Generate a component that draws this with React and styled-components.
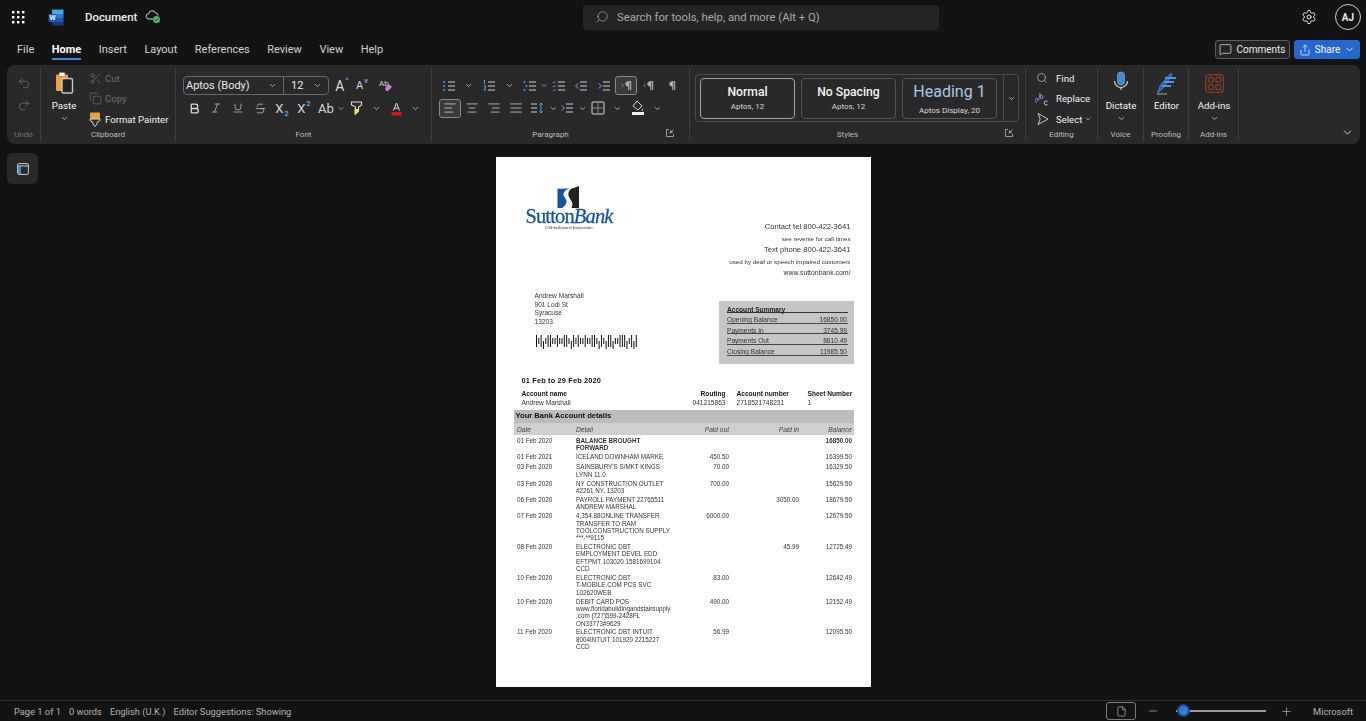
import React from 'react';
import styled, { createGlobalStyle } from 'styled-components';
import {
  Undo2, Redo2, Scissors, Copy, Bold, Italic, Underline, Strikethrough, ChevronDown, Search, Settings,
  MessageSquare, Share, File, Minus, Plus, AlignLeft, AlignCenter, AlignRight, AlignJustify,
} from 'lucide-react';

const GlobalStyle = createGlobalStyle`
  html, body { margin: 0; height: 100%; overflow: hidden; background: #131313; }
  * { box-sizing: border-box; }
  #root { height: 100%; }
`;

const Shell = styled.div`
  height: 100vh;
  display: flex;
  flex-direction: column;
  background: #131313;
  color: #e8e8e8;
  font-family: Roboto, "Noto Sans", sans-serif;
`;

const TitleBar = styled.header`
  height: 34px;
  display: grid;
  grid-template-columns: 583px 356px 1fr;
  align-items: center;
`;
const TitleLeft = styled.div`
  display: flex;
  align-items: center;
  padding-left: 11px;
`;
const DocName = styled.span`
  font-size: 11.4px;
  font-weight: 500;
  margin: 0 8px 0 21px;
  color: #f0f0f0;
`;
const SearchBox = styled.div`
  height: 25px;
  background: #242424;
  border-radius: 4px;
  display: flex;
  align-items: center;
  gap: 8px;
  padding-left: 12px;
  font-size: 11.3px;
  color: #ababab;
`;
const TitleRight = styled.div`
  display: flex;
  justify-content: flex-end;
  align-items: center;
  gap: 18px;
  padding-right: 5px;
`;
const Avatar = styled.div`
  width: 26px;
  height: 26px;
  border: 1px solid #cfcfcf;
  border-radius: 50%;
  display: flex;
  align-items: center;
  justify-content: center;
  font-size: 10px;
  font-weight: 700;
`;

const TabBar = styled.nav`
  height: 31px;
  display: flex;
  align-items: flex-start;
  padding: 5px 6px 0 17px;
`;
const Tab = styled.div`
  height: 21px;
  margin-right: 17.5px;
  font-size: 11px;
  line-height: 21px;
  font-weight: ${(p) => (p.$active ? 700 : 400)};
  color: ${(p) => (p.$active ? '#ffffff' : '#d4d4d4')};
  border-bottom: ${(p) => (p.$active ? '2px solid #3f87e0' : 'none')};
`;
const TabActions = styled.div`
  margin-left: auto;
  margin-top: 1px;
  display: flex;
  gap: 4px;
`;
const CommentsButton = styled.div`
  width: 75px;
  height: 19px;
  background: #232323;
  border: 1px solid #5c5c5c;
  border-radius: 3px;
  display: flex;
  align-items: center;
  justify-content: center;
  gap: 4px;
  font-size: 10px;
  color: #ececec;
`;
const ShareButton = styled(CommentsButton)`
  width: 66px;
  background: #2468cf;
  border-color: #2468cf;
  color: #fff;
`;

const Ribbon = styled.section`
  height: 79px;
  margin: 0 6px 0 7px;
  padding: 3px 0;
  background: #292929;
  border-radius: 8px;
  display: flex;
  position: relative;
`;
const Group = styled.div`
  width: ${(p) => p.$w}px;
  flex: none;
  display: flex;
  flex-direction: column;
  border-right: 1px solid #3e3e3e;
  position: relative;
`;
const GroupBody = styled.div`
  height: 59px;
  padding-top: ${(p) => p.$top || 0}px;
  display: flex;
  flex-direction: ${(p) => (p.$row ? 'row' : 'column')};
  gap: ${(p) => p.$gap || 0}px;
  padding-left: ${(p) => p.$left || 0}px;
`;
const GroupLabel = styled.div`
  height: 14px;
  font-size: 8px;
  line-height: 15px;
  text-align: center;
  padding-right: ${(p) => p.$shift || 0}px;
  color: ${(p) => (p.$dim ? '#767676' : '#bdbdbd')};
`;
const Launcher = styled.div`
  position: absolute;
  right: ${(p) => p.$right}px;
  bottom: 4px;
  color: #b5b5b5;
  display: flex;
`;
const ToolRow = styled.div`
  height: ${(p) => p.$h || 20}px;
  display: flex;
  align-items: center;
`;
const Tool = styled.div`
  width: ${(p) => p.$w || 22}px;
  height: ${(p) => p.$h || 19}px;
  flex: none;
  display: flex;
  align-items: center;
  justify-content: center;
  color: ${(p) => (p.$dim ? '#767676' : '#d8d8d8')};
  font-size: ${(p) => p.$fs || 12}px;
  border-radius: 3px;
  border: ${(p) => (p.$on ? '1px solid #8a8a8a' : 'none')};
  background: ${(p) => (p.$on ? '#3a3a3a' : 'transparent')};
`;
const Spacer = styled.div`
  width: ${(p) => p.$w}px;
  flex: none;
`;
const Accent = styled.span`
  color: #5b9fe6;
  font-size: 8px;
  font-weight: 700;
  margin-left: 1px;
  align-self: ${(p) => (p.$up ? 'flex-start' : 'flex-end')};
`;
const BigColumn = styled.div`
  width: ${(p) => p.$w}px;
  display: flex;
  flex-direction: column;
  align-items: center;
  font-size: 9.7px;
  color: #f4f4f4;
`;
const BigIcon = styled.div`
  height: 30px;
  display: flex;
  align-items: center;
`;
const BigText = styled.div`
  line-height: 15px;
  margin-bottom: 1px;
`;
const SmallAction = styled.div`
  height: 20.5px;
  flex: none;
  display: flex;
  align-items: center;
  gap: ${(p) => p.$gap || 4}px;
  font-size: 9.6px;
  color: ${(p) => (p.$dim ? '#6f6f6f' : '#f2f2f2')};
`;
const ActionIcon = styled.div`
  width: 16px;
  display: flex;
  justify-content: center;
  color: ${(p) => (p.$dim ? '#767676' : '#cfcfcf')};
`;
const SelectChev = styled.span`
  display: flex;
  margin-left: -4px;
`;
const Combo = styled.div`
  width: 146px;
  height: 19px;
  flex: none;
  border: 1px solid #686868;
  border-radius: 4px;
  display: grid;
  grid-template-columns: 100px 1fr;
  font-size: 11px;
  color: #ececec;
`;
const ComboCell = styled.div`
  display: flex;
  align-items: center;
  justify-content: space-between;
  padding: 0 6px 0 ${(p) => p.$pad}px;
  border-right: ${(p) => (p.$split ? '1px solid #686868' : 'none')};
`;
const StylesBox = styled.div`
  width: 324px;
  height: 48px;
  margin: 6px 0 0 5px;
  border: 1px solid #4b4b4b;
  border-radius: 4px;
  display: flex;
  align-items: center;
  padding-left: 4px;
  gap: 6px;
`;
const StyleCard = styled.div`
  width: 95px;
  height: 41px;
  flex: none;
  border: 1px solid ${(p) => (p.$on ? '#a2a2a2' : '#555555')};
  border-radius: 4px;
  display: flex;
  flex-direction: column;
  align-items: center;
  justify-content: center;
`;
const StyleName = styled.div`
  font-size: 12.2px;
  line-height: 17px;
  font-weight: 500;
  color: #f4f4f4;
`;
const HeadingName = styled.div`
  font-size: 16px;
  line-height: 22px;
  margin-bottom: 2px;
  color: #a9c6e6;
`;
const StyleMeta = styled.div`
  font-size: 8px;
  line-height: 11px;
  color: #dadada;
`;
const MoreStyles = styled.div`
  width: 22px;
  height: 100%;
  margin-left: auto;
  border-left: 1px solid #4b4b4b;
  display: flex;
  align-items: center;
  justify-content: center;
`;
const RibbonCollapse = styled.div`
  position: absolute;
  right: 6px;
  bottom: 5px;
  color: #e4e4e4;
  display: flex;
`;

const Main = styled.main`
  flex: 1;
  min-height: 0;
  display: grid;
  grid-template-columns: 1fr 375px 1fr;
`;
const SidePanel = styled.div`
  padding: 9px 0 0 7px;
`;
const SideButton = styled.div`
  width: 31px;
  height: 31px;
  background: #292929;
  border-radius: 6px;
  display: flex;
  align-items: center;
  justify-content: center;
`;
const Page = styled.article`
  width: 375px;
  height: 530px;
  margin-top: 13px;
  background: #fff;
  color: #222;
  font-family: "Liberation Sans", Arial, sans-serif;
  font-size: 6.6px;
  filter: blur(0.3px);
`;
const PageHead = styled.div`
  height: 125px;
  display: flex;
  justify-content: space-between;
  padding: 29px 20px 0 29px;
`;
const LogoBlock = styled.div`
  width: 89px;
  display: flex;
  flex-direction: column;
  align-items: center;
  color: #15559b;
`;
const LogoMark = styled.div`
  display: flex;
  margin-right: 2px;
`;
const LogoWord = styled.div`
  font-family: "Liberation Serif", serif;
  font-size: 20.5px;
  line-height: 17px;
  letter-spacing: -0.85px;
  white-space: nowrap;
  -webkit-text-stroke: 0.3px #15559b;
  em { font-style: italic; }
`;
const LogoTag = styled.div`
  font-family: "Liberation Serif", serif;
  font-size: 4.6px;
  line-height: 5px;
  color: #333;
`;
const Contact = styled.div`
  margin-top: 35px;
  text-align: right;
`;
const ContactLine = styled.div`
  font-size: ${(p) => p.$size}px;
  line-height: ${(p) => (p.$tall ? 12 : 11)}px;
  color: #333;
`;
const AddressRow = styled.div`
  height: 84px;
  display: flex;
  justify-content: space-between;
  padding: 10px 17px 0 39px;
`;
const Address = styled.div`
  line-height: 8.6px;
  color: #333;
`;
const Barcode = styled.div`
  display: flex;
  margin: 9px 0 0 1px;
`;
const Summary = styled.div`
  width: 135px;
  height: 63px;
  margin-top: 9px;
  background: #c6c6c6;
  padding: 4px 5.5px 0 8.5px;
  color: #333;
`;
const SummaryTitle = styled.div`
  height: 8px;
  line-height: 9px;
  font-weight: 700;
  border-bottom: 0.6px solid #333;
  color: #222;
`;
const SummaryRow = styled.div`
  height: 10.7px;
  padding-top: 3px;
  display: flex;
  justify-content: space-between;
  border-bottom: 0.6px solid #444;
  line-height: 8px;
  span:last-child { padding-right: 1px; }
`;
const Period = styled.div`
  padding: 9.5px 0 0 26px;
  font-size: 7.4px;
  line-height: 9px;
  font-weight: 700;
  letter-spacing: 0.15px;
  color: #111;
`;
const AccountGrid = styled.div`
  margin-top: 5.5px;
  padding-left: 26px;
  display: grid;
  grid-template-columns: 120px 84px 11px 71px auto;
  line-height: 8.5px;
  color: #333;
`;
const AccountHead = styled.div`
  font-weight: 700;
  color: #111;
  text-align: ${(p) => (p.$right ? 'right' : 'left')};
`;
const AccountCell = styled.div`
  text-align: ${(p) => (p.$right ? 'right' : 'left')};
`;
const Gap = styled.div``;
const Statement = styled.div`
  margin: 3px 17px 0 18px;
`;
const StatementTitle = styled.div`
  height: 13px;
  background: #bcbcbc;
  font-size: 7.6px;
  font-weight: 700;
  line-height: 11px;
  padding-left: 2px;
  color: #111;
`;
const TxnGrid = styled.div`
  display: grid;
  grid-template-columns: 59px 100px 53px 70px 53px;
  padding: 0 1.5px 0 3.5px;
`;
const TxnHead = styled(TxnGrid)`
  height: 12px;
  background: #cfcfcf;
  font-style: italic;
  align-items: center;
  color: #444;
`;
const TxnRow = styled(TxnGrid)`
  font-size: 6.3px;
  line-height: 7.33px;
  min-height: 10.6px;
  padding-top: 1.6px;
  color: #333;
  font-weight: ${(p) => (p.$bold ? 700 : 400)};
`;
const TxnDate = styled.div`
  font-weight: 400;
`;
const Num = styled.div`
  text-align: right;
`;
const DetailText = styled.div`
  white-space: pre-line;
`;

const StatusBar = styled.footer`
  height: 21px;
  border-top: 1px solid #333;
  display: flex;
  align-items: center;
  padding: 0 13px 0 14px;
  font-size: 9.3px;
  color: #b4b4b4;
`;
const StatusItem = styled.span`
  margin-right: 8px;
`;
const StatusRight = styled.div`
  margin-left: auto;
  display: flex;
  align-items: center;
`;
const ViewButton = styled.div`
  width: 30px;
  height: 18px;
  border: 1px solid #7c7c7c;
  border-radius: 3px;
  display: flex;
  align-items: center;
  justify-content: center;
  margin-right: 11px;
`;
const ZoomTrack = styled.div`
  width: 90px;
  height: 2px;
  margin: 0 14px 0 17px;
  background: #9a9a9a;
  position: relative;
`;
const ZoomThumb = styled.div`
  position: absolute;
  left: 1px;
  top: -6px;
  width: 13px;
  height: 13px;
  border-radius: 50%;
  background: #2f7de0;
  border: 2px solid #1c4a86;
`;
const Company = styled.span`
  margin-left: 20px;
`;

const Chev = ({ size = 9, color = '#d0d0d0' }) => <ChevronDown size={size} color={color} strokeWidth={2} />;

const thin = { size: 14, strokeWidth: 1.3 };

const Waffle = () => (
  <svg width="14" height="14" viewBox="0 0 14 14" fill="#fff">
    {[1, 6, 11].flatMap((y) => [1, 6, 11].map((x) => <rect key={`${x}-${y}`} x={x} y={y} width="2.4" height="2.4" />))}
  </svg>
);

const WordLogo = () => (
  <svg width="16" height="17" viewBox="0 0 16 17" style={{ marginLeft: 23 }}>
    <path d="M4 1.5a1 1 0 0 1 1-1h9.5a1 1 0 0 1 1 1v3.5H4z" fill="#41a5ee" />
    <rect x="4" y="5" width="11.5" height="4" fill="#2b7cd3" />
    <rect x="4" y="9" width="11.5" height="4" fill="#185abd" />
    <path d="M4 13h11.5v2.5a1 1 0 0 1-1 1H5a1 1 0 0 1-1-1z" fill="#103f91" />
    <rect x="0.5" y="5" width="8" height="8" rx="1" fill="#185abd" />
    <text x="4.5" y="11.3" textAnchor="middle" fontSize="6.5" fontWeight="700" fill="#fff" fontFamily="Liberation Sans">W</text>
  </svg>
);

const CloudCheck = () => (
  <svg width="16" height="14" viewBox="0 0 16 14" fill="none">
    <path d="M8 9H4a2.6 2.6 0 0 1-.4-5.2A3.6 3.6 0 0 1 10.5 3a2.6 2.6 0 0 1 2.6 2.6" stroke="#d5d5d5" strokeWidth="1" />
    <circle cx="11.5" cy="9.5" r="3.5" fill="#4fb66a" />
    <path d="M9.8 9.6l1.2 1.2 2.2-2.4" stroke="#10301a" strokeWidth="1" />
  </svg>
);

const PasteIcon = () => (
  <svg width="20" height="24" viewBox="0 0 20 24" fill="none">
    <path d="M2 4.5a1 1 0 0 1 1-1h10a1 1 0 0 1 1 1V20H3a1 1 0 0 1-1-1z" fill="#eda13a" />
    <rect x="5" y="1.5" width="6" height="4" rx="1" fill="#f3f3f3" stroke="#8e6a2a" strokeWidth=".5" />
    <rect x="8" y="7.5" width="10.5" height="14.5" rx="1.5" fill="#222" stroke="#c9c9c9" strokeWidth="1.4" />
  </svg>
);

const BrushIcon = () => (
  <svg width="12" height="15" viewBox="0 0 12 15" fill="none">
    <rect x="1" y="0.5" width="10" height="6.5" rx="1" fill="#eda13a" />
    <path d="M1 7h10v1.5L8 10.5V12l-2 2.5L4 12v-1.5L1 8.5z" fill="#2a2a2a" stroke="#d8d8d8" strokeWidth="1" />
  </svg>
);

// list icons: lines in grey, markers in blue
const Lines = ({ x = 6, ys = [3, 7, 11], color = '#cfcfcf', w = 13 }) =>
  ys.map((y) => <path key={y} d={`M${x} ${y}h${w - x}`} stroke={color} strokeWidth="1" />);

const ListIcon = ({ kind }) => (
  <svg width="14" height="14" viewBox="0 0 14 14" fill="none">
    <Lines />
    {kind === 'bullets' && [3, 7, 11].map((y) => <circle key={y} cx="2.2" cy={y} r="1" fill="#5b9fe6" />)}
    {kind === 'numbers' && <path d="M2.5 1v4M2 7h2L2 11h2.2" stroke="#5b9fe6" strokeWidth="1" />}
    {kind === 'multi' && [[1.5, 3], [3.5, 7], [1.5, 11]].map(([x, y]) => <circle key={y} cx={x} cy={y} r=".9" fill="#5b9fe6" />)}
    {kind === 'check' && <path d="M.8 3l1 1 1.8-2M.8 7l1 1 1.8-2M.8 11l1 1 1.8-2" stroke="#5b9fe6" strokeWidth=".9" />}
    {kind === 'outdent' && <path d="M4.5 4.5L1.5 7l3 2.5" stroke="#5b9fe6" strokeWidth="1" />}
    {kind === 'indent' && <path d="M1.5 4.5l3 2.5-3 2.5" stroke="#5b9fe6" strokeWidth="1" />}
  </svg>
);

// paragraph mark, with a small blue arrow for the text direction buttons
const ParaMark = ({ dir }) => (
  <svg width="13" height="13" viewBox="0 0 14 14" fill="none">
    <path d="M9.5 3v9M11.5 3v9M12 3H8.5a2.2 2.2 0 0 0 0 4.6h1" stroke="#c8c8c8" strokeWidth="1" />
    <path d="M9 3.4h-.5a1.7 1.7 0 0 0 0 3.6H9z" fill="#c8c8c8" />
    {dir === 'ltr' && <path d="M2 5.5l1.6 1.5L2 8.5" stroke="#5b9fe6" strokeWidth="1" />}
    {dir === 'rtl' && <path d="M3.6 5.5L2 7l1.6 1.5" stroke="#5b9fe6" strokeWidth="1" />}
  </svg>
);

const LineSpacing = () => (
  <svg width="14" height="14" viewBox="0 0 14 14" fill="none">
    <path d="M1 3h6M1 7h6M1 11h6" stroke="#cfcfcf" />
    <path d="M11 2v10M9.3 3.7L11 2l1.7 1.7M9.3 10.3L11 12l1.7-1.7" stroke="#5b9fe6" />
  </svg>
);

const Borders = () => (
  <svg width="14" height="14" viewBox="0 0 14 14" fill="none">
    <rect x="1" y="1" width="12" height="12" rx="1" stroke="#d6d6d6" />
    <path d="M7 1v12M1 7h12" stroke="#8c8c8c" />
  </svg>
);

const Shading = () => (
  <svg width="14" height="16" viewBox="0 0 14 16" fill="none">
    <path d="M6 1l5 5-4 4-5-4z" stroke="#d6d6d6" />
    <path d="M11.5 8l1 2a1 1 0 1 1-2 0z" fill="#5b9fe6" />
    <rect x="1" y="12" width="12" height="3" fill="#f2f2f2" />
  </svg>
);

const Highlighter = () => (
  <svg width="13" height="15" viewBox="0 0 13 15" fill="none">
    <path d="M1.5 1h10v3l-3 2v4l-3 3V6l-4-2z" stroke="#dcdcdc" strokeWidth="1.1" />
    <path d="M4.5 8h4v2.5l-3 3H4.5z" fill="#f4e44a" />
  </svg>
);

const FontColor = () => (
  <svg width="15" height="15" viewBox="0 0 15 15" fill="none">
    <path d="M4.5 9.5L7.5 2l3 7.5M5.5 7.2h4" stroke="#d6d6d6" strokeWidth="1" />
    <rect x="2.5" y="11" width="10" height="3.5" fill="#e21313" />
  </svg>
);

const ClearFormat = () => (
  <svg width="15" height="15" viewBox="0 0 15 15" fill="none">
    <text x="0" y="7.5" fontSize="8" fill="#d6d6d6" fontFamily="Roboto">Ab</text>
    <path d="M6 10l4-4 3 3-4 4H7z" fill="#c77ad6" />
  </svg>
);

const LauncherIcon = () => (
  <svg width="8" height="8" viewBox="0 0 8 8" fill="none" stroke="currentColor" strokeWidth=".8">
    <path d="M3 .5H.5v7h7V5M3.5 4.5l4-4M4.5 1.5l2 2h-2z" />
  </svg>
);

const ReplaceIcon = () => (
  <svg width="14" height="14" viewBox="0 0 14 14" fill="none">
    <path d="M5 1v5.5" stroke="#b784d8" strokeWidth="1.2" />
    <circle cx="6.5" cy="5" r="1.6" stroke="#b784d8" />
    <path d="M4 8a2 2 0 1 0-2 2.5M2 8l2 0" stroke="#5b9fe6" />
    <path d="M12.5 9.5a2 2 0 1 0 0 3" stroke="#cfcfcf" />
  </svg>
);

const SelectIcon = () => (
  <svg width="13" height="14" viewBox="0 0 13 14" fill="none">
    <path d="M2 1.5L12 7 2 12.5 4.2 7z" stroke="#c4c4c4" strokeWidth="1" />
  </svg>
);

const MicIcon = () => (
  <svg width="18" height="26" viewBox="0 0 18 26" fill="none">
    <rect x="5.5" y="2" width="7" height="13" rx="3.5" fill="#3f87d8" stroke="#8cbcec" strokeWidth=".6" />
    <path d="M2.5 11a6.5 6.5 0 0 0 13 0M9 17.5V20" stroke="#d2d2d2" strokeWidth="1.2" />
  </svg>
);

const EditorIcon = () => (
  <svg width="22" height="24" viewBox="0 0 22 24" fill="none">
    <path d="M1.5 22l3-8L15 2l1 2L7 17z" fill="#1e5fae" stroke="#4c93e0" strokeWidth=".8" />
    <path d="M9 7h11M8 11h10M6 15h9" stroke="#4c93e0" strokeWidth="2" />
    <path d="M1 23h10" stroke="#c9c9c9" strokeWidth=".8" />
  </svg>
);

const AddInsIcon = () => (
  <svg width="19" height="19" viewBox="0 0 19 19" fill="none" stroke="#8f3a25" strokeWidth="1.2">
    <rect x=".7" y=".7" width="17.6" height="17.6" rx="3" />
    <circle cx="5.8" cy="5.8" r="2.6" />
    <circle cx="13.2" cy="5.8" r="2.6" />
    <circle cx="5.8" cy="13.2" r="2.6" />
    <circle cx="13.2" cy="13.2" r="2.6" />
  </svg>
);

const PanelIcon = () => (
  <svg width="12" height="12" viewBox="0 0 12 12" fill="none">
    <rect x=".6" y=".6" width="10.8" height="10.8" rx="1.5" stroke="#cfcfcf" />
    <rect x="1" y="3" width="3" height="8" fill="#3f87d8" />
    <path d="M1 3h10" stroke="#cfcfcf" />
  </svg>
);

const SuttonMark = () => (
  <svg width="23" height="22" viewBox="0 0 23 23">
    <path d="M0 3l12-.5C7 5 5 8 7 11c2 3 4 5 1 9l-3 3H0z" fill="#15559b" />
    <path d="M22.5 0v23h-8c2-4 1-6-1-9-3-4-3-8 1-11z" fill="#222" />
  </svg>
);

const BARS = [2, 1, 2, 1, 1, 2, 2, 1, 1, 2, 1, 1, 2, 2, 1, 1, 2, 1, 2, 1, 1, 2, 1, 1, 2, 2, 1, 1, 2, 1, 1, 2, 2, 1, 1, 1, 2, 2, 2, 1, 1, 2, 1, 2];

const BarcodeIcon = () => (
  <svg width="102" height="14" viewBox="0 0 102 14">
    {BARS.map((kind, i) => (
      <rect
        key={i}
        x={i * 2.32}
        y={kind === 2 ? 0 : i % 3 === 0 ? 6 : 3}
        width="1"
        height={kind === 2 ? 12 : i % 3 === 0 ? 8 : 6}
        fill="#111"
      />
    ))}
  </svg>
);

const SUMMARY = [
  ['Opening Balance', '16850.00'],
  ['Payments In', '3745.99'],
  ['Payments Out', '8610.49'],
  ['Closing Balance', '11985.50'],
];

const TXNS = [
  ['01 Feb 2020', 'BALANCE BROUGHT\nFORWARD', '', '', '16850.00', true],
  ['01 Feb 2021', 'ICELAND DOWNHAM MARKE', '450.50', '', '16399.50'],
  ['03 Feb 2020', "SAINSBURY'S S/MKT KINGS\nLYNN 11.0", '70.00', '', '16329.50'],
  ['03 Feb 2020', 'NY CONSTRUCTION OUTLET\n#2261 NY, 13203', '700.00', '', '15629.50'],
  ['06 Feb 2020', 'PAYROLL PAYMENT 22765511\nANDREW MARSHAL', '', '3050.00', '18679.50'],
  ['07 Feb 2020', '4,354.88ONLINE TRANSFER\nTRANSFER TO RAM\nTOOLCONSTRUCTION SUPPLY\n***-**9115', '6000.00', '', '12679.50'],
  ['08 Feb 2020', 'ELECTRONIC DBT\nEMPLOYMENT DEVEL EDD\nEFTPMT 103020 1581699104\nCCD', '', '45.99', '12725.49'],
  ['10 Feb 2020', 'ELECTRONIC DBT\nT-MOBILE.COM PCS SVC\n102620WEB', '83.00', '', '12642.49'],
  ['10 Feb 2020', 'DEBIT CARD POS\nwww.floridabuildingandstairsupply\n.com (727)599-2428FL\nON33773#9629', '490.00', '', '12152.49'],
  ['11 Feb 2020', 'ELECTRONIC DBT INTUIT\n8004INTUIT 101920 2215227\nCCD', '56.99', '', '12095.50'],
];

const ribbonPara1 = (
  <ToolRow $h={19}>
    <Spacer $w={7} />
    <Tool $w={20}><ListIcon kind="bullets" /></Tool>
    <Tool $w={18}><Chev /></Tool>
    <Tool $w={24}><ListIcon kind="numbers" /></Tool>
    <Tool $w={16}><Chev /></Tool>
    <Spacer $w={3} />
    <Tool $w={20}><ListIcon kind="multi" /></Tool>
    <Tool $w={8}><Chev /></Tool>
    <Tool $w={22}><ListIcon kind="check" /></Tool>
    <Tool $w={22}><ListIcon kind="outdent" /></Tool>
    <Tool $w={23}><ListIcon kind="indent" /></Tool>
    <Tool $w={22} $on><ParaMark dir="ltr" /></Tool>
    <Tool $w={22}><ParaMark dir="rtl" /></Tool>
    <Tool $w={22}><ParaMark /></Tool>
  </ToolRow>
);

const ribbonPara2 = (
  <ToolRow>
    <Spacer $w={7} />
    <Tool $w={22} $on><AlignLeft {...thin} /></Tool>
    <Tool $w={22}><AlignCenter {...thin} /></Tool>
    <Tool $w={22}><AlignRight {...thin} /></Tool>
    <Tool $w={22}><AlignJustify {...thin} /></Tool>
    <Tool $w={20}><LineSpacing /></Tool>
    <Tool $w={12}><Chev /></Tool>
    <Tool $w={16}><ListIcon kind="indent" /></Tool>
    <Tool $w={14}><Chev /></Tool>
    <Tool $w={18}><Borders /></Tool>
    <Tool $w={20}><Chev /></Tool>
    <Tool $w={21}><Shading /></Tool>
    <Tool $w={19}><Chev /></Tool>
  </ToolRow>
);

export default function App() {
  return (
    <Shell>
      <GlobalStyle />
      <TitleBar>
        <TitleLeft>
          <Waffle />
          <WordLogo />
          <DocName>Document</DocName>
          <CloudCheck />
        </TitleLeft>
        <SearchBox>
          <Search size={14} strokeWidth={1.2} style={{ transform: 'scaleX(-1)' }} />
          Search for tools, help, and more (Alt + Q)
        </SearchBox>
        <TitleRight>
          <Settings size={16} strokeWidth={1.5} />
          <Avatar>AJ</Avatar>
        </TitleRight>
      </TitleBar>

      <TabBar>
        {['File', 'Home', 'Insert', 'Layout', 'References', 'Review', 'View', 'Help'].map((t) => (
          <Tab key={t} $active={t === 'Home'}>{t}</Tab>
        ))}
        <TabActions>
          <CommentsButton><MessageSquare size={13} strokeWidth={1.3} />Comments</CommentsButton>
          <ShareButton><Share size={12} strokeWidth={1.4} />Share<ChevronDown size={11} /></ShareButton>
        </TabActions>
      </TabBar>

      <Ribbon>
        <Group $w={34}>
          <GroupBody $top={4}>
            <Tool $w={34} $h={22} $dim><Undo2 {...thin} /></Tool>
            <Tool $w={34} $h={22} $dim><Redo2 {...thin} /></Tool>
          </GroupBody>
          <GroupLabel $dim>Undo</GroupLabel>
        </Group>

        <Group $w={135}>
          <GroupBody $row>
            <BigColumn $w={46}>
              <BigIcon><PasteIcon /></BigIcon>
              <BigText>Paste</BigText>
              <Chev />
            </BigColumn>
            <div>
              <SmallAction $dim $gap={2}>
                <ActionIcon $dim><Scissors size={13} strokeWidth={1.2} /></ActionIcon>Cut
              </SmallAction>
              <SmallAction $dim $gap={2}>
                <ActionIcon $dim><Copy size={13} strokeWidth={1.2} /></ActionIcon>Copy
              </SmallAction>
              <SmallAction $gap={2}>
                <ActionIcon><BrushIcon /></ActionIcon>Format Painter
              </SmallAction>
            </div>
          </GroupBody>
          <GroupLabel>Clipboard</GroupLabel>
        </Group>

        <Group $w={256}>
          <GroupBody $top={8} $gap={3} $left={7}>
            <ToolRow $h={19}>
              <Combo>
                <ComboCell $pad={2} $split>Aptos (Body)<Chev /></ComboCell>
                <ComboCell $pad={7}>12<Chev /></ComboCell>
              </Combo>
              <Spacer $w={3} />
              <Tool $w={20} $fs={14}>A<Accent $up>^</Accent></Tool>
              <Tool $w={20} $fs={11}>A<Accent $up>v</Accent></Tool>
              <Tool $w={28}><ClearFormat /></Tool>
            </ToolRow>
            <ToolRow>
              <Tool><Bold size={13} strokeWidth={2.4} /></Tool>
              <Tool><Italic size={12} strokeWidth={1.3} /></Tool>
              <Tool><Underline size={12} strokeWidth={1.3} /></Tool>
              <Tool><Strikethrough size={13} strokeWidth={1.2} /></Tool>
              <Tool $fs={13}>X<Accent>2</Accent></Tool>
              <Tool $fs={13}>X<Accent $up>2</Accent></Tool>
              <Tool $fs={13}>Ab</Tool>
              <Tool $w={8}><Chev /></Tool>
              <Tool $w={22}><Highlighter /></Tool>
              <Tool $w={18}><Chev /></Tool>
              <Tool $w={22}><FontColor /></Tool>
              <Tool $w={16}><Chev /></Tool>
            </ToolRow>
          </GroupBody>
          <GroupLabel>Font</GroupLabel>
        </Group>

        <Group $w={258}>
          <GroupBody $top={8} $gap={3}>
            {ribbonPara1}
            {ribbonPara2}
          </GroupBody>
          <GroupLabel $shift={20}>Paragraph</GroupLabel>
          <Launcher $right={15}><LauncherIcon /></Launcher>
        </Group>

        <Group $w={336}>
          <GroupBody>
            <StylesBox>
              <StyleCard $on>
                <StyleName>Normal</StyleName>
                <StyleMeta>Aptos, 12</StyleMeta>
              </StyleCard>
              <StyleCard>
                <StyleName>No Spacing</StyleName>
                <StyleMeta>Aptos, 12</StyleMeta>
              </StyleCard>
              <StyleCard>
                <HeadingName>Heading 1</HeadingName>
                <StyleMeta>Aptos Display, 20</StyleMeta>
              </StyleCard>
              <MoreStyles><Chev /></MoreStyles>
            </StylesBox>
          </GroupBody>
          <GroupLabel $shift={20}>Styles</GroupLabel>
          <Launcher $right={12}><LauncherIcon /></Launcher>
        </Group>

        <Group $w={72}>
          <GroupBody $left={8}>
            <SmallAction $gap={6}><ActionIcon><Search size={12} strokeWidth={1.3} /></ActionIcon>Find</SmallAction>
            <SmallAction $gap={6}><ActionIcon><ReplaceIcon /></ActionIcon>Replace</SmallAction>
            <SmallAction $gap={6}>
              <ActionIcon><SelectIcon /></ActionIcon>
              Select<SelectChev><Chev size={8} /></SelectChev>
            </SmallAction>
          </GroupBody>
          <GroupLabel>Editing</GroupLabel>
        </Group>

        <Group $w={46}>
          <GroupBody>
            <BigColumn $w={46}>
              <BigIcon><MicIcon /></BigIcon>
              <BigText>Dictate</BigText>
              <Chev />
            </BigColumn>
          </GroupBody>
          <GroupLabel>Voice</GroupLabel>
        </Group>

        <Group $w={45}>
          <GroupBody>
            <BigColumn $w={45}>
              <BigIcon><EditorIcon /></BigIcon>
              <BigText>Editor</BigText>
            </BigColumn>
          </GroupBody>
          <GroupLabel>Proofing</GroupLabel>
        </Group>

        <Group $w={50}>
          <GroupBody>
            <BigColumn $w={50}>
              <BigIcon><AddInsIcon /></BigIcon>
              <BigText>Add-ins</BigText>
              <Chev />
            </BigColumn>
          </GroupBody>
          <GroupLabel>Add-ins</GroupLabel>
        </Group>

        <RibbonCollapse><ChevronDown size={13} strokeWidth={1.6} /></RibbonCollapse>
      </Ribbon>

      <Main>
        <SidePanel>
          <SideButton><PanelIcon /></SideButton>
        </SidePanel>
        <Page>
          <PageHead>
            <LogoBlock>
              <LogoMark><SuttonMark /></LogoMark>
              <LogoWord>Sutton<em>Bank</em></LogoWord>
              <LogoTag>Old-fashioned Innovation</LogoTag>
            </LogoBlock>
            <Contact>
              <ContactLine $size={7.6} $tall>Contact tel 800-422-3641</ContactLine>
              <ContactLine $size={6.2}>see reverse for call times</ContactLine>
              <ContactLine $size={7.6} $tall>Text phone 800-422-3641</ContactLine>
              <ContactLine $size={6.25}>used by deaf or speech impaired customers</ContactLine>
              <ContactLine $size={6.9}>www.suttonbank.com/</ContactLine>
            </Contact>
          </PageHead>

          <AddressRow>
            <div>
              <Address>
                Andrew Marshall<br />901 Lodi St<br />Syracuse<br />13203
              </Address>
              <Barcode><BarcodeIcon /></Barcode>
            </div>
            <Summary>
              <SummaryTitle>Account Summary</SummaryTitle>
              {SUMMARY.map(([label, value]) => (
                <SummaryRow key={label}><span>{label}</span><span>{value}</span></SummaryRow>
              ))}
            </Summary>
          </AddressRow>

          <Period>01 Feb to 29 Feb 2020</Period>
          <AccountGrid>
            <AccountHead>Account name</AccountHead>
            <AccountHead $right>Routing</AccountHead>
            <Gap />
            <AccountHead>Account number</AccountHead>
            <AccountHead>Sheet Number</AccountHead>
            <AccountCell>Andrew Marshall</AccountCell>
            <AccountCell $right>041215863</AccountCell>
            <Gap />
            <AccountCell>2718521748231</AccountCell>
            <AccountCell>1</AccountCell>
          </AccountGrid>

          <Statement>
            <StatementTitle>Your Bank Account details</StatementTitle>
            <TxnHead>
              <div>Date</div>
              <div>Detail</div>
              <Num>Paid out</Num>
              <Num>Paid in</Num>
              <Num>Balance</Num>
            </TxnHead>
            {TXNS.map(([date, detail, out, paid, balance, bold]) => (
              <TxnRow key={date + balance} $bold={bold}>
                <TxnDate>{date}</TxnDate>
                <DetailText>{detail}</DetailText>
                <Num>{out}</Num>
                <Num>{paid}</Num>
                <Num>{balance}</Num>
              </TxnRow>
            ))}
          </Statement>
        </Page>
        <div />
      </Main>

      <StatusBar>
        <StatusItem>Page 1 of 1</StatusItem>
        <StatusItem>0 words</StatusItem>
        <StatusItem>English (U.K.)</StatusItem>
        <StatusItem>Editor Suggestions: Showing</StatusItem>
        <StatusRight>
          <ViewButton><File size={11} strokeWidth={1.5} /></ViewButton>
          <Minus size={12} strokeWidth={1.4} />
          <ZoomTrack><ZoomThumb /></ZoomTrack>
          <Plus size={13} strokeWidth={1.3} />
          <Company>Microsoft</Company>
        </StatusRight>
      </StatusBar>
    </Shell>
  );
}
